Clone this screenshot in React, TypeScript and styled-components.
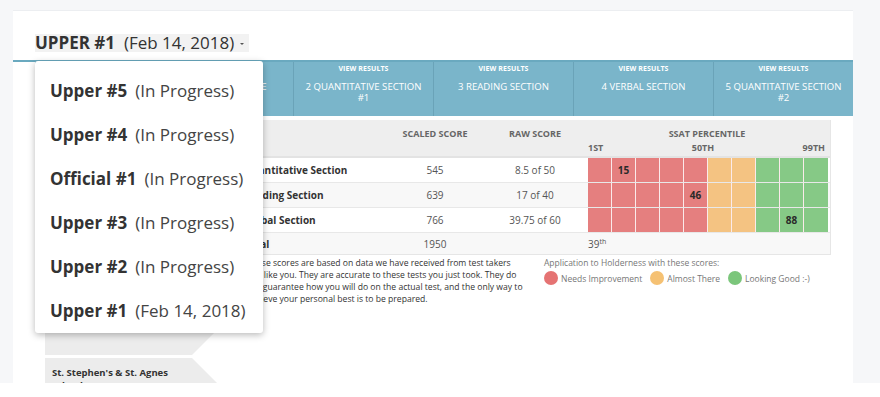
import React from 'react';
import styled, { createGlobalStyle } from 'styled-components';

const GlobalStyle = createGlobalStyle`
  body {
    margin: 0;
    background: #ffffff;
    font-family: 'Open Sans', 'Noto Sans', Arial, sans-serif;
    color: #333;
  }
`;

const Page = styled.div`
  height: 383px;
  overflow: hidden;
  background: #f6f7f9;
  padding: 10px 0 0 13px;
  box-sizing: border-box;
`;

const Card = styled.div`
  width: 840px;
  height: 100%;
  background: #fff;
  border-top: 1px solid #eceef1;
  box-sizing: border-box;
`;

const Header = styled.div`
  padding: 21px 22px 6px;
  border-bottom: 2px solid #6aa9bf;
`;

const TitleWrap = styled.div`
  position: relative;
  display: inline-flex;
`;

const TitleButton = styled.div`
  display: inline-flex;
  align-items: center;
  height: 18px;
  padding-right: 5px;
  background: #f2f2f2;
  font-size: 17px;
  color: #333;
  white-space: pre;
`;

const Strong = styled.span`
  font-weight: 700;
`;

const Caret = styled.span`
  display: inline-block;
  margin-left: 6px;
  margin-top: 2px;
  border-left: 2.5px solid transparent;
  border-right: 2.5px solid transparent;
  border-top: 2.5px solid #555;
`;

const Menu = styled.div`
  position: absolute;
  top: 27px;
  left: 0;
  z-index: 10;
  width: 228px;
  padding-top: 8px;
  background: #fff;
  border-radius: 3px;
  box-shadow: 0 2px 7px rgba(0, 0, 0, 0.28);
`;

const MenuItem = styled.div`
  display: flex;
  align-items: center;
  height: 44px;
  padding-left: 15px;
  font-size: 17px;
  color: #444;
  white-space: nowrap;
`;

const MenuName = styled.span`
  font-weight: 700;
  color: #333;
  margin-right: 8px;
`;

const Tabs = styled.div`
  display: flex;
  margin-left: 22px;
  height: 54px;
  background: #7ab5ca;
`;

const Tab = styled.div<{ $w: number }>`
  width: ${(p) => p.$w}px;
  box-sizing: border-box;
  border-left: 1px solid #6aa3b8;
  padding: 2px 8px 0;
  text-align: center;
  color: #fff;
  &:first-child {
    border-left: none;
  }
`;

const TabKicker = styled.div`
  font-size: 7px;
  font-weight: 700;
  line-height: 10px;
  letter-spacing: 0.1px;
`;

const TabName = styled.div`
  margin-top: 7px;
  font-size: 9.6px;
  line-height: 11px;
  text-transform: uppercase;
`;

const Body = styled.div`
  display: grid;
  grid-template-columns: 202px 594px;
  margin: 4px 22px 0;
`;

const Sidebar = styled.div`
  display: flex;
  flex-direction: column;
  gap: 3px;
  padding: 31px 0 0 10px;
`;

const School = styled.div`
  width: 180px;
  height: 66px;
  box-sizing: border-box;
  padding: 8px 40px 0 7px;
  background: #ececec;
  clip-path: polygon(0 0, 147px 0, 180px 50%, 147px 100%, 0 100%);
  font-size: 9.5px;
  font-weight: 700;
  line-height: 13px;
  color: #333;
`;

const Main = styled.div``;

const Table = styled.div`
  border: 1px solid #e6e6e6;
  border-top: none;
`;

const cols = '147px 100px 100px 1fr';

const HeadRow = styled.div`
  display: grid;
  grid-template-columns: ${cols};
  height: 38px;
  box-sizing: border-box;
  background: #eeeeee;
  border-bottom: 2px solid #e3e3e3;
  font-size: 9px;
  font-weight: 700;
  color: #666;
  text-transform: uppercase;
`;

const HeadCell = styled.div`
  padding-top: 7px;
  text-align: center;
  line-height: 13px;
`;

const PctHead = styled.div`
  padding: 7px 4px 0 3px;
  line-height: 13px;
  text-align: center;
`;

const PctMarks = styled.div`
  display: flex;
  justify-content: space-between;
  margin-top: 1px;
  padding-right: 1px;
`;

const Row = styled.div<{ $alt?: boolean; $h?: number }>`
  display: grid;
  grid-template-columns: ${cols};
  height: ${(p) => p.$h ?? 25}px;
  box-sizing: border-box;
  align-items: center;
  background: ${(p) => (p.$alt ? '#f8f8f8' : '#fff')};
  border-bottom: 1px solid #e8e8e8;
  font-size: 10px;
  color: #555;
  &:last-child {
    border-bottom: none;
  }
`;

const Label = styled.div`
  padding-left: 6px;
  font-weight: 700;
  color: #333;
`;

const Num = styled.div`
  text-align: center;
`;

const Bar = styled.div`
  display: grid;
  grid-template-columns: repeat(10, 24px);
  height: 100%;
  padding: 0 4px 0 3px;
`;

const Cell = styled.div<{ $tone: 'red' | 'amber' | 'green' }>`
  display: flex;
  align-items: center;
  justify-content: center;
  border-right: 1px solid #fbeaea;
  background: ${(p) => ({ red: '#e57f7f', amber: '#f4c382', green: '#86c986' })[p.$tone]};
  font-weight: 700;
  color: #2a2a2a;
  &:last-child {
    border-right: none;
  }
`;

const Rank = styled.div`
  padding-left: 3px;
  font-size: 10px;
  color: #555;
  sup {
    font-size: 7px;
    vertical-align: 4px;
    line-height: 0;
  }
`;

const Notes = styled.div`
  display: grid;
  grid-template-columns: 272px 1fr;
  gap: 25px;
  padding: 2px 0 0 10px;
`;

const Disclaimer = styled.p`
  margin: 0;
  font-size: 8.6px;
  line-height: 12px;
  color: #333;
  white-space: nowrap;
`;

const Legend = styled.div`
  font-size: 8.5px;
  color: #777;
`;

const LegendTitle = styled.div`
  line-height: 12px;
`;

const LegendItems = styled.div`
  display: flex;
  align-items: center;
  gap: 8px;
  margin-top: 2px;
`;

const LegendItem = styled.div`
  display: flex;
  align-items: center;
  gap: 3px;
`;

const Dot = styled.span<{ $c: string }>`
  width: 14px;
  height: 14px;
  border-radius: 50%;
  background: ${(p) => p.$c};
`;

const tabs = [
  { w: 118, name: 'Overview' },
  { w: 140, name: '1 Writing Sample' },
  { w: 140, name: '2 Quantitative Section #1' },
  { w: 140, name: '3 Reading Section' },
  { w: 140, name: '4 Verbal Section' },
  { w: 140, name: '5 Quantitative Section #2' },
];

const tests = [
  ['Upper #5', '(In Progress)'],
  ['Upper #4', '(In Progress)'],
  ['Official #1', '(In Progress)'],
  ['Upper #3', '(In Progress)'],
  ['Upper #2', '(In Progress)'],
  ['Upper #1', '(Feb 14, 2018)'],
];

const schools = ['Holderness School', 'Phillips Exeter Academy', 'The Hotchkiss School', "St. Stephen's & St. Agnes School"];

const rows = [
  { name: 'Quantitative Section', scaled: 545, raw: '8.5 of 50', pct: 15 },
  { name: 'Reading Section', scaled: 639, raw: '17 of 40', pct: 46 },
  { name: 'Verbal Section', scaled: 766, raw: '39.75 of 60', pct: 88 },
];

const tone = (i: number) => (i < 5 ? 'red' : i < 7 ? 'amber' : 'green');

export default function App() {
  return (
    <>
      <GlobalStyle />
      <Page>
        <Card>
          <Header>
            <TitleWrap>
              <TitleButton>
                <Strong>UPPER #1</Strong>  (Feb 14, 2018)
                <Caret />
              </TitleButton>
              <Menu>
                {tests.map(([name, status]) => (
                  <MenuItem key={name}>
                    <MenuName>{name}</MenuName>
                    {status}
                  </MenuItem>
                ))}
              </Menu>
            </TitleWrap>
          </Header>
          <Tabs>
            {tabs.map((t) => (
              <Tab key={t.name} $w={t.w}>
                <TabKicker>VIEW RESULTS</TabKicker>
                <TabName>{t.name}</TabName>
              </Tab>
            ))}
          </Tabs>
          <Body>
            <Sidebar>
              {schools.map((s) => (
                <School key={s}>{s}</School>
              ))}
            </Sidebar>
            <Main>
              <Table>
                <HeadRow>
                  <HeadCell />
                  <HeadCell>Scaled Score</HeadCell>
                  <HeadCell>Raw Score</HeadCell>
                  <PctHead>
                    SSAT Percentile
                    <PctMarks>
                      <span>1st</span>
                      <span>50th</span>
                      <span>99th</span>
                    </PctMarks>
                  </PctHead>
                </HeadRow>
                {rows.map((r, ri) => (
                  <Row key={r.name} $alt={ri % 2 === 1}>
                    <Label>{r.name}</Label>
                    <Num>{r.scaled}</Num>
                    <Num>{r.raw}</Num>
                    <Bar>
                      {Array.from({ length: 10 }, (_, i) => (
                        <Cell key={i} $tone={tone(i)}>
                          {Math.min(Math.floor(r.pct / 10), 9) === i ? r.pct : ''}
                        </Cell>
                      ))}
                    </Bar>
                  </Row>
                ))}
                <Row $alt $h={21}>
                  <Label>Total</Label>
                  <Num>1950</Num>
                  <Num />
                  <Rank>
                    39<sup>th</sup>
                  </Rank>
                </Row>
              </Table>
              <Notes>
                <Disclaimer>
                  These scores are based on data we have received from test takers
                  <br />
                  just like you. They are accurate to these tests you just took. They do
                  <br />
                  not guarantee how you will do on the actual test, and the only way to
                  <br />
                  achieve your personal best is to be prepared.
                </Disclaimer>
                <Legend>
                  <LegendTitle>Application to Holderness with these scores:</LegendTitle>
                  <LegendItems>
                    <LegendItem>
                      <Dot $c="#e57373" />
                      Needs Improvement
                    </LegendItem>
                    <LegendItem>
                      <Dot $c="#f5c173" />
                      Almost There
                    </LegendItem>
                    <LegendItem>
                      <Dot $c="#7bc67b" />
                      Looking Good :-)
                    </LegendItem>
                  </LegendItems>
                </Legend>
              </Notes>
            </Main>
          </Body>
        </Card>
      </Page>
    </>
  );
}
